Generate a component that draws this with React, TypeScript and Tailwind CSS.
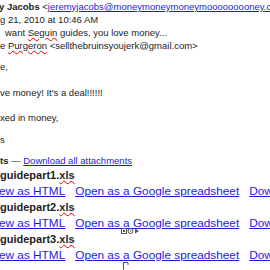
export default function App() {
  const link = "text-[#1c1ce0] underline";
  const squig = "underline decoration-wavy decoration-[#ee0000] decoration-1 underline-offset-[1px]";
  const files = ["guidepart1", "guidepart2", "guidepart3"];
  return (
    <div className="relative w-[270px] h-[270px] overflow-hidden bg-white text-[#222] font-['Liberation_Sans',Arial,sans-serif]">
      <div className="text-[9.5px] leading-[13px] whitespace-nowrap">
        <div className="-ml-[1px]">
          <b>y Jacobs</b> &lt;
          <span className={link}>{"jeremyjacobs@moneymoneymoneym" + "o".repeat(8) + "ney.com"}</span>&gt;
        </div>
        <div>g 21, 2010 at 10:46 AM</div>
        <div className="pl-[5px]">
          want <span className={squig}>Seguin</span> guides, you love money...
        </div>
        <div>
          e <span className={squig}>Purgeron</span> &lt;sellthebruinsyoujerk@gmail.com&gt;
        </div>
        <div className="mt-[8px]">e,</div>
        <div className="mt-[13px]">ve money! It's a deal!!!!!!</div>
        <div className="mt-[12px]">xed in money,</div>
        <div className="mt-[9px]">s</div>
        <div className="mt-[8px]">
          <b>ts</b> — <span className={link}>Download all attachments</span>
        </div>
      </div>
      <div className="whitespace-nowrap">
        {files.map((f) => (
          <div key={f}>
            <div className="text-[11px] leading-[16px] font-bold">
              {f}.<span className={squig}>xls</span>
            </div>
            <div className="flex gap-[10px] text-[11.8px] leading-[16px] -ml-[1px]">
              <span className={link}>ew as HTML</span>
              <span className={link}>Open as a Google spreadsheet</span>
              <span className={link}>Download</span>
            </div>
          </div>
        ))}
      </div>
      <svg className="absolute left-[121px] top-[227px]" width="20" height="8" viewBox="0 0 20 8">
        <rect x="0.5" y="1.5" width="5" height="5" fill="none" stroke="#555" strokeWidth="1" />
        <rect x="2" y="3" width="2" height="2" fill="#555" />
        <circle cx="9.5" cy="4" r="2.5" fill="none" stroke="#555" strokeWidth="1" />
        <circle cx="9.5" cy="4" r="0.8" fill="#555" />
        <path d="M14 1.5 L18 4 L14 6.5 Z" fill="#555" />
      </svg>
      <svg className="absolute left-[123px] top-[262px]" width="6" height="8" viewBox="0 0 6 8">
        <path d="M0.5 0 V8 M0.5 0.5 H5 V3" fill="none" stroke="#555" strokeWidth="1" />
      </svg>
    </div>
  );
}
